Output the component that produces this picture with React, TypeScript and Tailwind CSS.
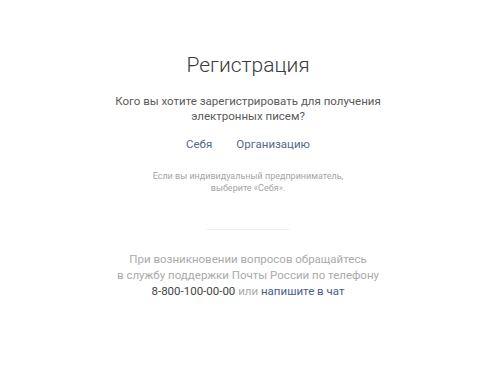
import React from 'react';

const App: React.FC = () => {
  return (
    <div
      className="w-[500px] h-[391px] pr-[4px] bg-white flex flex-col items-center text-center"
      style={{ fontFamily: 'Roboto, "Noto Sans", sans-serif' }}
    >
      {/* Title */}
      <h1 className="mt-[51px] text-[21px] leading-[28px] font-light text-[#3a3a3a]">Регистрация</h1>

      {/* Question */}
      <p className="mt-[15px] text-[11.5px] leading-[15px] text-[#5a5a5a]">
        Кого вы хотите зарегистрировать для получения
        <br />
        электронных писем?
      </p>

      {/* Options */}
      <div className="mt-[13px] flex gap-[24px] text-[11.5px] leading-[15px] text-[#55698a]">
        <a href="#">Себя</a>
        <a href="#">Организацию</a>
      </div>

      {/* Hint */}
      <p className="mt-[18px] text-[9px] leading-[12px] text-[#a5a5a5]">
        Если вы индивидуальный предприниматель,
        <br />
        выберите «Себя».
      </p>

      {/* Divider */}
      <div className="mt-[35px] w-[82px] h-px bg-[#eeeeee]" />

      {/* Support */}
      <p className="mt-[21px] text-[11.5px] leading-[16px] text-[#aaaaaa]">
        При возникновении вопросов обращайтесь
        <br />
        в службу поддержки Почты России по телефону
        <br />
        <span className="text-[#444444]">8-800-100-00-00</span> или{' '}
        <a href="#" className="text-[#46608a]">
          напишите в чат
        </a>
      </p>
    </div>
  );
};

export default App;
